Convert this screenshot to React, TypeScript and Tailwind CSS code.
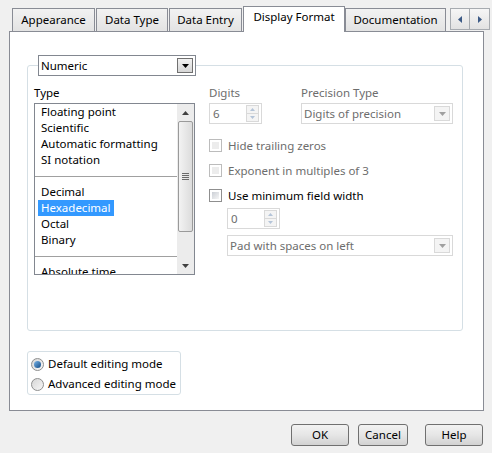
import type { ReactNode } from "react";

const TABS = [
  { label: "Appearance", w: "w-[83px]" },
  { label: "Data Type", w: "w-[72px]" },
  { label: "Data Entry", w: "w-[73px]" },
];

function Tab({ label, w }: { label: string; w: string }) {
  return (
    <div
      className={`${w} h-[23px] border border-b-0 border-[#898c95] bg-gradient-to-b from-[#f2f2f2] to-[#e3e3e3] flex items-center justify-center leading-none`}
    >
      {label}
    </div>
  );
}

function Arrow({ dir, color = "#000" }: { dir: "down" | "up" | "left" | "right"; color?: string }) {
  const pts = {
    down: "0,0 7,0 3.5,4",
    up: "0,4 7,4 3.5,0",
    left: "4,0 4,7 0,3.5",
    right: "0,0 0,7 4,3.5",
  }[dir];
  const size = dir === "down" || dir === "up" ? { w: 7, h: 4 } : { w: 4, h: 7 };
  return (
    <svg width={size.w} height={size.h} viewBox={`0 0 ${size.w} ${size.h}`}>
      <polygon points={pts} fill={color} />
    </svg>
  );
}

function Combo({ text, w, disabled }: { text: string; w: string; disabled?: boolean }) {
  return (
    <div
      className={`${w} h-[21px] border flex items-center bg-white ${
        disabled ? "border-[#d9d9d9] text-[#6d6d6d]" : "border-[#828790] text-black"
      }`}
    >
      <span className="flex-1 pl-[2px] leading-none">{text}</span>
      <div
        className={`w-[16px] h-[15px] mr-[2px] border flex items-center justify-center ${
          disabled
            ? "border-[#d9d9d9] bg-[#f4f4f4]"
            : "border-[#707070] bg-gradient-to-b from-[#f2f2f2] to-[#d6d6d6]"
        }`}
      >
        <Arrow dir="down" color={disabled ? "#a0a0a0" : "#000"} />
      </div>
    </div>
  );
}

function Spin({ value }: { value: string }) {
  return (
    <div className="w-[53px] h-[21px] border border-[#d9d9d9] bg-white flex items-center text-[#6d6d6d]">
      <span className="flex-1 pl-[3px] leading-none">{value}</span>
      <div className="w-[13px] h-[17px] mr-[2px] flex flex-col">
        <div className="flex-1 border border-[#d9d9d9] bg-[#f4f4f4] flex items-center justify-center">
          <svg width="5" height="3" viewBox="0 0 5 3">
            <polygon points="0,3 5,3 2.5,0" fill="#b4c4d8" />
          </svg>
        </div>
        <div className="flex-1 border border-t-0 border-[#d9d9d9] bg-[#f4f4f4] flex items-center justify-center">
          <svg width="5" height="3" viewBox="0 0 5 3">
            <polygon points="0,0 5,0 2.5,3" fill="#b4c4d8" />
          </svg>
        </div>
      </div>
    </div>
  );
}

function Check({ label, disabled }: { label: string; disabled?: boolean }) {
  return (
    <div className="h-[25px] flex items-center">
      <div
        className={`w-[13px] h-[13px] border p-[2px] ${
          disabled ? "border-[#bcbcbc]" : "border-[#8f8f8f]"
        }`}
      >
        <div
          className={`w-full h-full ${
            disabled ? "bg-[#ececec]" : "bg-gradient-to-br from-[#cbcfd5] to-[#f6f6f6]"
          }`}
        />
      </div>
      <span className={`ml-[6px] leading-none ${disabled ? "text-[#6d6d6d]" : "text-black"}`}>
        {label}
      </span>
    </div>
  );
}

function Radio({ label, checked }: { label: string; checked?: boolean }) {
  return (
    <div className="h-[20px] flex items-center">
      <div className="w-[13px] h-[13px] rounded-full border border-[#8e8f8f] bg-gradient-to-br from-[#d6d6d6] to-[#f7f7f7] flex items-center justify-center">
        {checked && (
          <div className="w-[7px] h-[7px] rounded-full bg-gradient-to-br from-[#78b4e8] to-[#0f4b85]" />
        )}
      </div>
      <span className="ml-[4px] leading-none">{label}</span>
    </div>
  );
}

function Item({ children, selected }: { children: ReactNode; selected?: boolean }) {
  return (
    <div className="h-[16px] flex items-center pl-[3px]">
      <span
        className={`px-[3px] h-[16px] leading-[15px] ${selected ? "bg-[#3399ff] text-white" : ""}`}
      >
        {children}
      </span>
    </div>
  );
}

function Separator() {
  return (
    <div className="h-[16px] pt-[8px]">
      <div className="h-px bg-[#a0a0a0]" />
    </div>
  );
}

function Button({ label, w }: { label: string; w: string }) {
  return (
    <div
      className={`${w} h-[22px] rounded-[3px] border border-[#707070] bg-gradient-to-b from-[#f2f2f2] via-[#e6e6e6] to-[#d2d2d2] flex items-center justify-center leading-none`}
    >
      {label}
    </div>
  );
}

export default function App() {
  return (
    <div className="w-[492px] h-[453px] bg-[#f0f0f0] pt-[6px] text-[11.5px] text-black font-['Noto_Sans',sans-serif] whitespace-nowrap overflow-hidden">
      {/* tab strip */}
      <div className="flex items-end h-[25px] pl-[12px]">
        {TABS.map((t) => (
          <div key={t.label} className="mr-px">
            <Tab label={t.label} w={t.w} />
          </div>
        ))}
        <div className="relative z-10 -mb-px w-[102px] h-[26px] border border-b-0 border-[#898c95] bg-white flex items-start justify-center pt-[4px] leading-none">
          Display Format
        </div>
        <Tab label="Documentation" w="w-[101px]" />
        <div className="ml-[4px] mb-px flex h-[22px]">
          <div className="w-[20px] border border-[#a7abb0] bg-gradient-to-b from-[#f6f6f6] to-[#e2e2e2] flex items-center justify-center">
            <Arrow dir="left" color="#3c5a86" />
          </div>
          <div className="w-[20px] border border-l-0 border-[#a7abb0] bg-gradient-to-b from-[#f6f6f6] to-[#e2e2e2] flex items-center justify-center">
            <Arrow dir="right" color="#3c5a86" />
          </div>
        </div>
      </div>

      {/* tab panel */}
      <div className="ml-[9px] w-[475px] h-[380px] border border-[#898c95] bg-white">
        <fieldset className="ml-[17px] mt-[23px] w-[436px] h-[276px] border border-[#d5dfe5] rounded-[3px] p-0 m-0">
          <legend className="ml-[10px] p-0">
            <Combo text="Numeric" w="w-[158px]" />
          </legend>
          <div className="flex pl-[6px] pt-[10px]">
            {/* type list */}
            <div className="w-[161px]">
              <div className="h-[17px] leading-[14px]">Type</div>
              <div className="h-[172px] border border-[#828790] flex overflow-hidden">
                <div className="flex-1 overflow-hidden">
                  <Item>Floating point</Item>
                  <Item>Scientific</Item>
                  <Item>Automatic formatting</Item>
                  <Item>SI notation</Item>
                  <Separator />
                  <Item>Decimal</Item>
                  <Item selected>Hexadecimal</Item>
                  <Item>Octal</Item>
                  <Item>Binary</Item>
                  <Separator />
                  <Item>Absolute time</Item>
                </div>
                <div className="w-[17px] bg-[#ececec] flex flex-col items-center">
                  <div className="h-[17px] flex items-center justify-center">
                    <Arrow dir="up" color="#404040" />
                  </div>
                  <div className="w-[15px] h-[111px] rounded-[2px] border border-[#9a9a9a] bg-gradient-to-r from-[#f3f3f3] to-[#dcdcdc] flex items-center justify-center">
                    <div className="w-[7px] flex flex-col gap-[1px]">
                      <div className="h-px bg-[#6b6b6b]" />
                      <div className="h-px bg-[#6b6b6b]" />
                      <div className="h-px bg-[#6b6b6b]" />
                      <div className="h-px bg-[#6b6b6b]" />
                    </div>
                  </div>
                  <div className="flex-1" />
                  <div className="h-[17px] flex items-center justify-center">
                    <Arrow dir="down" color="#404040" />
                  </div>
                </div>
              </div>
            </div>

            {/* options */}
            <div className="ml-[14px] flex flex-col">
              <div className="flex h-[17px] leading-[14px] text-[#6d6d6d]">
                <span className="w-[92px]">Digits</span>
                <span>Precision Type</span>
              </div>
              <div className="flex">
                <Spin value="6" />
                <div className="ml-[39px]">
                  <Combo text="Digits of precision" w="w-[152px]" disabled />
                </div>
              </div>
              <div className="mt-[9px]">
                <Check label="Hide trailing zeros" disabled />
                <Check label="Exponent in multiples of 3" disabled />
                <Check label="Use minimum field width" />
              </div>
              <div className="ml-[18px]">
                <Spin value="0" />
                <div className="mt-[6px]">
                  <Combo text="Pad with spaces on left" w="w-[226px]" disabled />
                </div>
              </div>
            </div>
          </div>
        </fieldset>

        {/* editing mode */}
        <div className="ml-[17px] mt-[20px] w-[154px] h-[44px] border border-[#d5dfe5] rounded-[3px] pl-[3px] pt-[2px]">
          <Radio label="Default editing mode" checked />
          <Radio label="Advanced editing mode" />
        </div>
      </div>

      {/* dialog buttons */}
      <div className="flex mt-[13px] pl-[291px]">
        <Button label="OK" w="w-[58px]" />
        <div className="ml-[9px]">
          <Button label="Cancel" w="w-[50px]" />
        </div>
        <div className="ml-[17px]">
          <Button label="Help" w="w-[58px]" />
        </div>
      </div>
    </div>
  );
}
